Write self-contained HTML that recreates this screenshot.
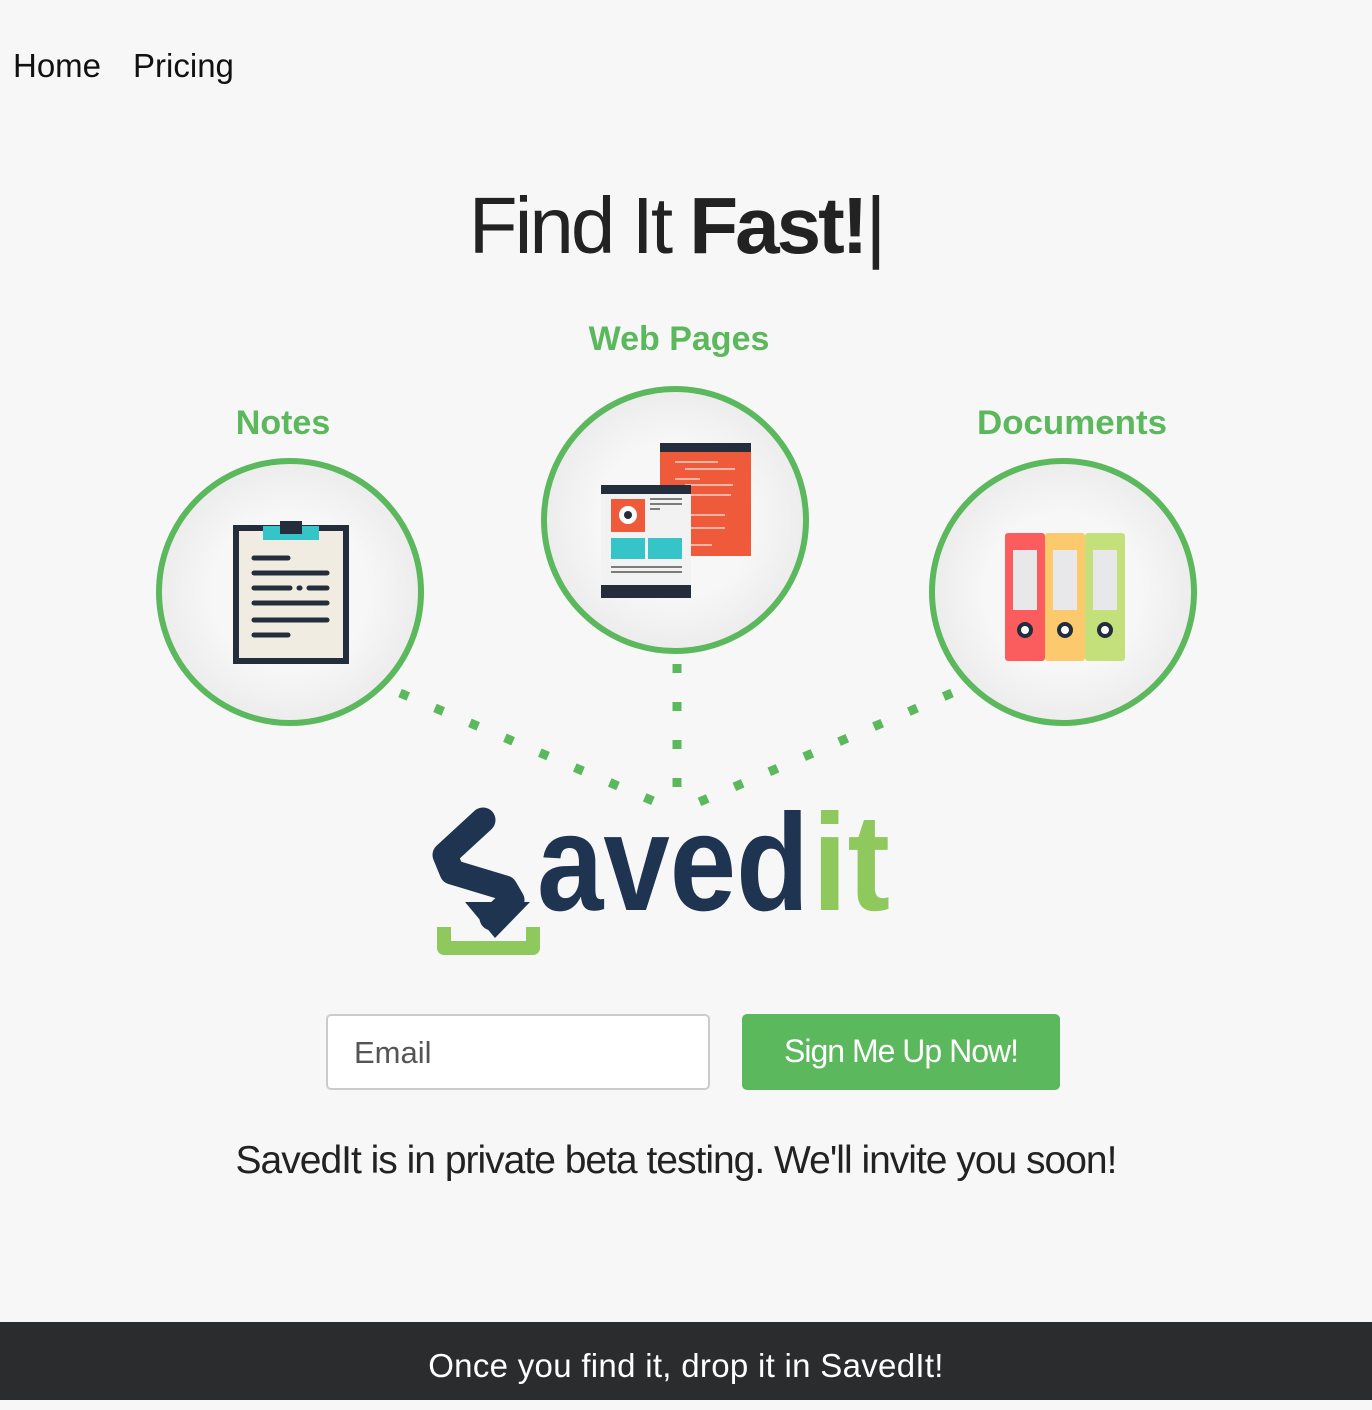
<!DOCTYPE html>
<html><head><meta charset="utf-8"><style>
body{margin:0;background:#f7f7f7;font-family:"Liberation Sans",sans-serif;width:1372px;height:1400px;position:relative;overflow:hidden}
.nav{position:absolute;top:47px;left:13px;font-size:33px;color:#111}
.nav span{margin-right:32px}
h1{position:absolute;top:180px;left:0;width:1352px;text-align:center;margin:0;font-size:80px;font-weight:normal;color:#222;letter-spacing:-3px}
svg{position:absolute;left:0;top:0}
.email{position:absolute;left:326px;top:1014px;width:384px;height:76px;border:2px solid #ccc;border-radius:5px;background:#fff;box-sizing:border-box;font-size:31px;color:#555;padding:19px 26px}
.btn{position:absolute;left:742px;top:1014px;width:318px;height:76px;background:#5cb85c;border-radius:5px;color:#fff;font-size:32px;text-align:center;line-height:74px;letter-spacing:-1px}
.note{position:absolute;top:1139px;left:0;width:1352px;text-align:center;font-size:39px;color:#222;letter-spacing:-1px}
.foot{position:absolute;top:1322px;left:0;width:1372px;height:78px;background:#2b2c2e;color:#fff;font-size:33px;text-align:center;line-height:88px;letter-spacing:.3px}
</style></head><body>
<div class="nav"><span>Home</span><span>Pricing</span></div>
<h1>Find It <b>Fast!</b>|</h1>
<svg width="1372" height="1000" viewBox="0 0 1372 1000">
<defs><radialGradient id="g"><stop offset="0.6" stop-color="#f7f7f7"/><stop offset="1" stop-color="#ececec"/></radialGradient></defs>
<g font-family="Liberation Sans,sans-serif" font-weight="bold" font-size="34" fill="#5cb85c" text-anchor="middle">
<text x="283" y="434">Notes</text><text x="679" y="350">Web Pages</text><text x="1072" y="434" textLength="190" lengthAdjust="spacingAndGlyphs">Documents</text></g>
<g fill="url(#g)" stroke="#5cb85c" stroke-width="6">
<circle cx="290" cy="592" r="131"/><circle cx="675" cy="520" r="131"/><circle cx="1063" cy="592" r="131"/></g>
<g stroke="#5cb85c" stroke-width="9" stroke-dasharray="9 29" fill="none">
<line x1="400" y1="693" x2="665" y2="806"/><line x1="677" y1="664" x2="677" y2="800"/><line x1="952" y1="693" x2="690" y2="806"/></g>
<rect x="236" y="528" width="110" height="133" fill="#f0ece1" stroke="#232d3b" stroke-width="6"/>
<rect x="263" y="526" width="56" height="14" fill="#35c5c9"/><rect x="280" y="521" width="22" height="13" fill="#232d3b"/>
<g stroke="#232d3b" stroke-width="5" stroke-linecap="round">
<line x1="254" y1="558" x2="288" y2="558"/><line x1="254" y1="573" x2="327" y2="573"/><line x1="254" y1="588" x2="290" y2="588"/><line x1="299" y1="588" x2="300" y2="588"/><line x1="309" y1="588" x2="327" y2="588"/><line x1="254" y1="603" x2="327" y2="603"/><line x1="254" y1="620" x2="327" y2="620"/><line x1="254" y1="635" x2="288" y2="635"/></g>
<rect x="660" y="443" width="91" height="113" fill="#ef5a3a"/><rect x="660" y="443" width="91" height="9" fill="#232d3b"/>
<g stroke="#fbd3c8" stroke-width="1.5"><line x1="675" y1="462" x2="718" y2="462"/><line x1="685" y1="469" x2="735" y2="469"/><line x1="675" y1="479" x2="700" y2="479"/><line x1="685" y1="485" x2="733" y2="485"/><line x1="690" y1="495" x2="731" y2="495"/><line x1="690" y1="515" x2="725" y2="515"/><line x1="690" y1="528" x2="725" y2="528"/><line x1="690" y1="545" x2="712" y2="545"/></g>
<rect x="601" y="485" width="90" height="113" fill="#f2f2f2"/><rect x="601" y="485" width="90" height="9" fill="#232d3b"/><rect x="601" y="585" width="90" height="13" fill="#232d3b"/>
<rect x="611" y="499" width="34" height="33" fill="#ef5a3a"/><circle cx="628" cy="515" r="9" fill="#fff"/><circle cx="628" cy="515" r="4" fill="#232d3b"/>
<rect x="611" y="538" width="34" height="21" fill="#35c5c9"/><rect x="648" y="538" width="34" height="21" fill="#35c5c9"/>
<g stroke="#555" stroke-width="1.5"><line x1="650" y1="499" x2="682" y2="499"/><line x1="650" y1="504" x2="682" y2="504"/><line x1="650" y1="509" x2="660" y2="509"/><line x1="611" y1="567" x2="682" y2="567"/><line x1="611" y1="572" x2="682" y2="572"/></g>
<rect x="1005" y="533" width="40" height="128" rx="3" fill="#fb5d5e"/><rect x="1045" y="533" width="40" height="128" rx="3" fill="#fdc96d"/><rect x="1085" y="533" width="40" height="128" rx="3" fill="#c3e07a"/>
<g fill="#e8e8ea"><rect x="1013" y="550" width="24" height="60"/><rect x="1053" y="550" width="24" height="60"/><rect x="1093" y="550" width="24" height="60"/></g>
<g fill="#fff" stroke="#232d3b" stroke-width="4"><circle cx="1025" cy="630" r="6"/><circle cx="1065" cy="630" r="6"/><circle cx="1105" cy="630" r="6"/></g>
<path d="M444 927 V948 H533 V927" fill="none" stroke="#8fc95e" stroke-width="14" stroke-linejoin="round"/>
<path d="M483 820 L445 855 L452 872 L505 888 L512 900 L492 918" fill="none" stroke="#1e3451" stroke-width="25" stroke-linecap="round" stroke-linejoin="round"/>
<path d="M465 902 L530 902 L495 938 Z" fill="#1e3451"/>
<text x="537" y="910" font-family="Liberation Sans,sans-serif" font-weight="bold" font-size="138" fill="#1e3451" textLength="272" lengthAdjust="spacingAndGlyphs">aved</text>
<text x="812" y="910" font-family="Liberation Sans,sans-serif" font-weight="bold" font-size="138" fill="#8fc95e" textLength="78" lengthAdjust="spacingAndGlyphs">it</text>
</svg>
<div class="email">Email</div>
<div class="btn">Sign Me Up Now!</div>
<div class="note">SavedIt is in private beta testing. We'll invite you soon!</div>
<div class="foot">Once you find it, drop it in SavedIt!</div>
</body></html>
